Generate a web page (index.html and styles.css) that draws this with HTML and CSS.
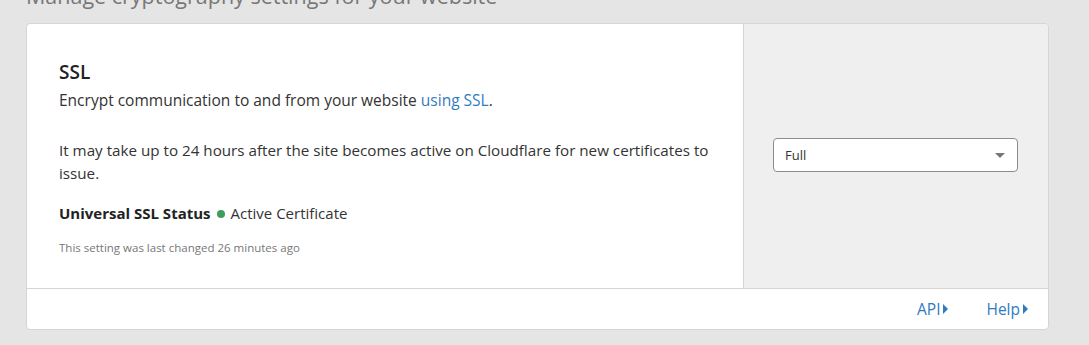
FILE: index.html
```html
<!DOCTYPE html>
<html lang="en">
<head>
    <meta charset="UTF-8">
    <title>SSL Settings</title>
    <link rel="stylesheet" href="styles.css">
</head>
<body>

    <p class="page-sub">Manage cryptography settings for your website</p>

    <div class="card">
        <div class="card-body">
            <div class="card-main">
                <h3>SSL</h3>
                <p>Encrypt communication to and from your website <a href="#">using SSL</a>.</p>
                <p class="gap">It may take up to 24 hours after the site becomes active on Cloudflare for new certificates to issue.</p>
                <div class="status">
                    <strong>Universal SSL Status</strong>
                    <span class="dot"></span>
                    <span>Active Certificate</span>
                </div>
                <p class="changed">This setting was last changed 26 minutes ago</p>
            </div>
            <div class="card-side">
                <div class="select">
                    <span>Full</span>
                    <span class="caret"></span>
                </div>
            </div>
        </div>
        <div class="card-footer">
            <a href="#">API<span class="arrow"></span></a>
            <a href="#">Help<span class="arrow"></span></a>
        </div>
    </div>

</body>
</html>
```

FILE: styles.css
```css
/* General */
* {
    box-sizing: border-box;
}
body {
    margin: 0;
    padding: 0 40px 0 26px;
    background: #e5e5e5;
    font-family: 'Open Sans', sans-serif;
    color: #333;
    overflow: hidden;
}
a {
    color: #2f7bbf;
    text-decoration: none;
}

/* Page subtitle (cut off at the top) */
.page-sub {
    margin: -19px 0 0 0;
    font-size: 21.5px;
    line-height: 30px;
    color: #777;
}

/* Card */
.card {
    margin-top: 12px;
    background: #fff;
    border: 1px solid #d5d5d5;
    border-radius: 4px;
    overflow: hidden;
}
.card-body {
    display: flex;
    border-bottom: 1px solid #d5d5d5;
}
.card-main {
    flex: 1;
    padding: 35px 18px 29px 32px;
    border-right: 1px solid #d5d5d5;
    font-size: 15.5px;
    line-height: 23px;
}
.card-main h3 {
    margin: 0 0 4px 0;
    font-size: 19px;
    font-weight: 600;
    line-height: 26px;
    color: #222;
}
.card-main p {
    margin: 0;
}
.card-main .gap {
    margin-top: 27px;
    font-size: 15.2px;
}

/* Status line */
.status {
    display: flex;
    align-items: center;
    margin-top: 17px;
    font-size: 15px;
}
.status strong {
    font-weight: 700;
    color: #222;
}
.dot {
    width: 8px;
    height: 8px;
    margin: 0 6px;
    border-radius: 50%;
    background: #3e9e5f;
}
.card-main .changed {
    margin-top: 11px;
    font-size: 11.5px;
    color: #777;
}

/* Side panel */
.card-side {
    width: 304px;
    padding: 0 30px 2px 29px;
    background: #efefef;
    display: flex;
    align-items: center;
}
.select {
    flex: 1;
    height: 34px;
    display: flex;
    align-items: center;
    justify-content: space-between;
    padding: 0 12px 0 11px;
    background: #fff;
    border: 1px solid #8c8c8c;
    border-radius: 4px;
    font-size: 13px;
    color: #333;
}
.caret {
    width: 0;
    height: 0;
    border-left: 5px solid transparent;
    border-right: 5px solid transparent;
    border-top: 5px solid #777;
}

/* Footer */
.card-footer {
    height: 40px;
    display: flex;
    justify-content: flex-end;
    align-items: center;
    gap: 38px;
    padding-right: 20px;
    font-size: 15.5px;
}
.card-footer a {
    display: flex;
    align-items: center;
}
.arrow {
    width: 0;
    height: 0;
    margin-left: 3px;
    border-top: 5px solid transparent;
    border-bottom: 5px solid transparent;
    border-left: 5px solid #2f7bbf;
}
```
